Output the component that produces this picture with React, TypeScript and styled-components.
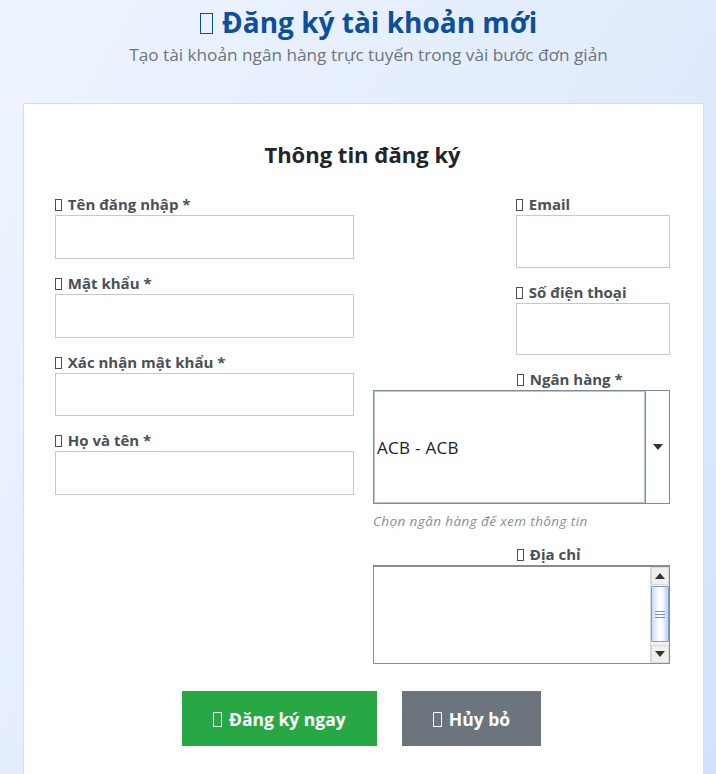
import React from "react";
import styled, { createGlobalStyle } from "styled-components";

const GlobalStyle = createGlobalStyle`
  html, body {
    margin: 0;
    padding: 0;
  }
  body {
    font-family: "Open Sans", Lato, sans-serif;
    background: linear-gradient(120deg, #eef4ff 0%, #e2ecfc 55%, #d3e2fb 100%);
    min-height: 100vh;
  }
`;

const Page = styled.div`
  padding: 0 12px 0 23px;
  min-height: 100vh;
`;

const Header = styled.header`
  text-align: center;
  padding-top: 4px;
  padding-left: 10px;
`;

const Title = styled.h1`
  margin: 0;
  font-size: 28px;
  line-height: 36px;
  font-weight: 700;
  color: #0b4f9e;
`;

const Subtitle = styled.p`
  margin: 4px 0 0;
  font-size: 17.2px;
  line-height: 22px;
  color: #6c757d;
`;

const Tofu = styled.span<{ $size?: number }>`
  display: inline-block;
  box-sizing: border-box;
  width: ${(p) => (p.$size ?? 12) * 0.62}px;
  height: ${(p) => p.$size ?? 12}px;
  border: 1px solid currentColor;
  margin-right: ${(p) => (p.$size ?? 12) * 0.45}px;
  vertical-align: -1px;
`;

const Card = styled.section`
  margin-top: 37px;
  background: #ffffff;
  border: 1px solid #dcdcdc;
  border-bottom: none;
  padding: 36px 33px 30px 31px;
`;

const CardTitle = styled.h2`
  margin: 0 0 26px;
  text-align: center;
  font-size: 22px;
  line-height: 28px;
  font-weight: 700;
  color: #212529;
`;

const Grid = styled.div`
  display: grid;
  grid-template-columns: 299px 297px;
  column-gap: 19px;
  align-items: start;
`;

const Column = styled.div`
  display: flex;
  flex-direction: column;
`;

const Group = styled.div<{ $narrow?: boolean; $last?: boolean }>`
  display: flex;
  flex-direction: column;
  margin-bottom: ${(p) => (p.$last ? "0" : "14px")};
  ${(p) => (p.$narrow ? "width: 154px; align-self: flex-end;" : "")}
`;

const Label = styled.label<{ $indent?: boolean }>`
  display: block;
  font-size: 15px;
  line-height: 20px;
  font-weight: 700;
  color: #495057;
  margin-bottom: 1px;
  padding-left: ${(p) => (p.$indent ? "144px" : "0")};
`;

const Input = styled.input<{ $h: number }>`
  box-sizing: border-box;
  width: 100%;
  height: ${(p) => p.$h}px;
  border: 1px solid #c8c8c8;
  background: #fff;
  padding: 0 13px;
  font-family: "Open Sans", sans-serif;
  font-size: 15px;
  color: #212529;
  outline: none;
  caret-color: #222;
`;

const SelectBox = styled.div`
  display: flex;
  height: 114px;
  border: 1px solid #7d8a99;
  box-sizing: border-box;
`;

const Select = styled.select`
  flex: 1;
  appearance: none;
  -webkit-appearance: none;
  border: 1px solid #b9c6d6;
  background: #fff;
  font-family: "Open Sans", sans-serif;
  font-size: 17px;
  letter-spacing: 0.3px;
  color: #222;
  padding: 0 2px;
  outline: none;
  margin: 0;
`;

const ArrowCell = styled.div`
  width: 23px;
  border-left: 1px solid #7d8a99;
  display: flex;
  align-items: center;
  justify-content: center;
  background: #fff;
`;

const Hint = styled.small`
  display: block;
  margin-top: 9px;
  font-size: 13.5px;
  letter-spacing: 0.4px;
  line-height: 17px;
  font-style: italic;
  color: #868e96;
`;

const AreaBox = styled.div`
  display: flex;
  height: 99px;
  box-sizing: border-box;
  border: 1px solid #878d95;
  border-top-width: 2px;
  background: #fff;
`;

const TextArea = styled.textarea`
  flex: 1;
  border: none;
  resize: none;
  outline: none;
  padding: 4px;
  font-family: "Open Sans", sans-serif;
  font-size: 15px;
`;

const Scrollbar = styled.div`
  width: 18px;
  display: flex;
  flex-direction: column;
  background: #f0f0f0;
  border-left: 1px solid #d8d8d8;
`;

const ScrollButton = styled.div`
  height: 18px;
  display: flex;
  align-items: center;
  justify-content: center;
  background: #efefef;
  border: 1px solid #dadada;
  box-sizing: border-box;
`;

const Thumb = styled.div`
  flex: 1;
  margin: 1px 0 3px;
  border: 1px solid #7b9cd2;
  border-radius: 1px;
  background: linear-gradient(90deg, #c9daf2 0%, #ffffff 45%, #ffffff 60%, #bcd0ee 100%);
  display: flex;
  flex-direction: column;
  align-items: center;
  justify-content: center;
  gap: 2px;
`;

const Grip = styled.span`
  width: 10px;
  height: 1px;
  background: #6f8fc6;
`;

const Actions = styled.div`
  display: flex;
  justify-content: center;
  gap: 25px;
  margin-top: 27px;
  padding-right: 2px;
`;

const Button = styled.button<{ $variant: "primary" | "secondary" }>`
  height: 55px;
  border: none;
  padding: 0 31px;
  font-family: "Open Sans", sans-serif;
  font-size: 17.5px;
  font-weight: 700;
  color: #fff;
  background: ${(p) => (p.$variant === "primary" ? "#28a745" : "#6c757d")};
  cursor: pointer;
`;

const Triangle = ({ up }: { up?: boolean }) => (
  <svg width="10" height="6" viewBox="0 0 10 6">
    <path d={up ? "M0 6 L5 0 L10 6 Z" : "M0 0 L10 0 L5 6 Z"} fill="#333" />
  </svg>
);

export default function App() {
  return (
    <>
      <GlobalStyle />
      <Page>
        <Header>
          <Title>
            <Tofu $size={21} />
            Đăng ký tài khoản mới
          </Title>
          <Subtitle>Tạo tài khoản ngân hàng trực tuyến trong vài bước đơn giản</Subtitle>
        </Header>

        <Card>
          <CardTitle>Thông tin đăng ký</CardTitle>
          <Grid>
            <Column>
              <Group>
                <Label>
                  <Tofu />
                  Tên đăng nhập *
                </Label>
                <Input $h={44} autoFocus />
              </Group>
              <Group>
                <Label>
                  <Tofu />
                  Mật khẩu *
                </Label>
                <Input $h={44} type="password" />
              </Group>
              <Group>
                <Label>
                  <Tofu />
                  Xác nhận mật khẩu *
                </Label>
                <Input $h={43} type="password" />
              </Group>
              <Group $last>
                <Label>
                  <Tofu />
                  Họ và tên *
                </Label>
                <Input $h={44} />
              </Group>
            </Column>

            <Column>
              <Group $narrow>
                <Label>
                  <Tofu />
                  Email
                </Label>
                <Input $h={53} type="email" />
              </Group>
              <Group $narrow>
                <Label>
                  <Tofu />
                  Số điện thoại
                </Label>
                <Input $h={52} />
              </Group>
              <Group>
                <Label $indent>
                  <Tofu />
                  Ngân hàng *
                </Label>
                <SelectBox>
                  <Select defaultValue="ACB">
                    <option value="ACB">ACB - ACB</option>
                  </Select>
                  <ArrowCell>
                    <Triangle />
                  </ArrowCell>
                </SelectBox>
                <Hint>Chọn ngân hàng để xem thông tin</Hint>
              </Group>
              <Group $last>
                <Label $indent>
                  <Tofu />
                  Địa chỉ
                </Label>
                <AreaBox>
                  <TextArea />
                  <Scrollbar>
                    <ScrollButton>
                      <Triangle up />
                    </ScrollButton>
                    <Thumb>
                      <Grip />
                      <Grip />
                      <Grip />
                    </Thumb>
                    <ScrollButton>
                      <Triangle />
                    </ScrollButton>
                  </Scrollbar>
                </AreaBox>
              </Group>
            </Column>
          </Grid>

          <Actions>
            <Button $variant="primary">
              <Tofu $size={15} />
              Đăng ký ngay
            </Button>
            <Button $variant="secondary">
              <Tofu $size={15} />
              Hủy bỏ
            </Button>
          </Actions>
        </Card>
      </Page>
    </>
  );
}
